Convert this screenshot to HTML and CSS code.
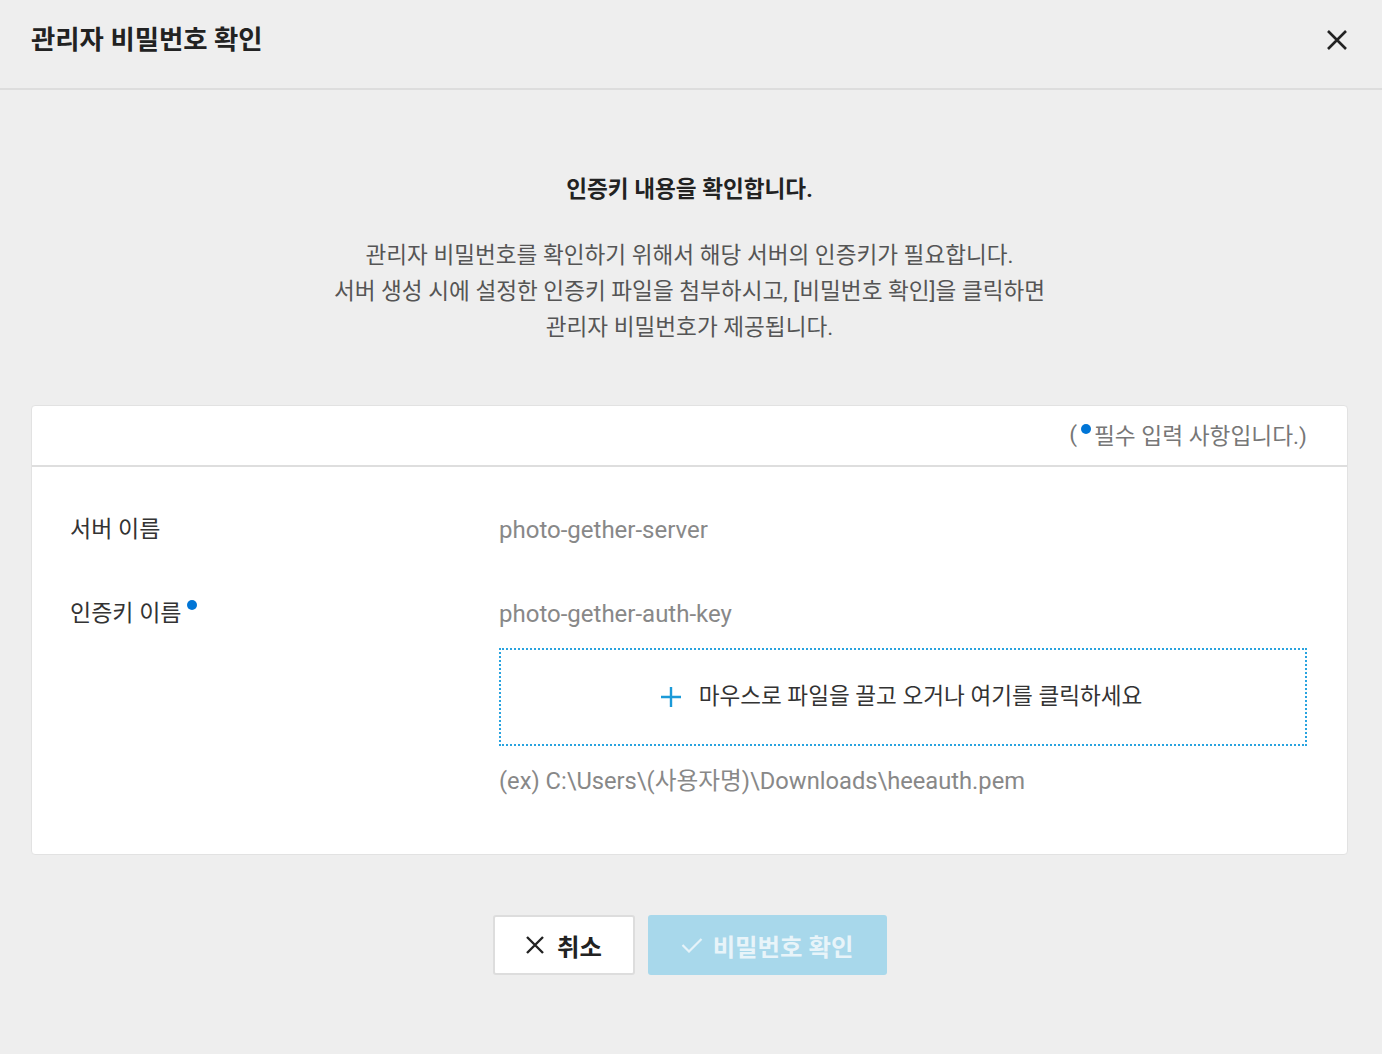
FILE: index.html
```html
<!DOCTYPE html>
<html lang="ko">
<head>
<meta charset="utf-8">
<title>관리자 비밀번호 확인</title>
<link rel="stylesheet" href="styles.css">
</head>
<body>
<header class="topbar">
  <h1 class="title">관리자 비밀번호 확인</h1>
  <button class="close" aria-label="닫기">
    <svg width="22" height="22" viewBox="0 0 22 22"><path d="M2 2L20 20M20 2L2 20" stroke="#222" stroke-width="2.6" fill="none"/></svg>
  </button>
</header>
<main class="content">
  <h2 class="lead">인증키 내용을 확인합니다.</h2>
  <p class="desc">관리자 비밀번호를 확인하기 위해서 해당 서버의 인증키가 필요합니다.<br>서버 생성 시에 설정한 인증키 파일을 첨부하시고, [비밀번호 확인]을 클릭하면<br>관리자 비밀번호가 제공됩니다.</p>

  <section class="card">
    <div class="card-head">(<span class="dot head-dot"></span>필수 입력 사항입니다.)</div>
    <div class="card-body">
      <div class="row">
        <div class="label">서버 이름</div>
        <div class="value">photo-gether-server</div>
      </div>
      <div class="row">
        <div class="label">인증키 이름<span class="dot label-dot"></span></div>
        <div class="field">
          <div class="value">photo-gether-auth-key</div>
          <div class="dropzone">
            <svg class="plus" width="22" height="22" viewBox="0 0 22 22"><path d="M11 1V21M1 11H21" stroke="#1b9ad8" stroke-width="2.4"/></svg>
            <span>마우스로 파일을 끌고 오거나 여기를 클릭하세요</span>
          </div>
          <div class="hint">(ex) C:\Users\(사용자명)\Downloads\heeauth.pem</div>
        </div>
      </div>
    </div>
  </section>

  <div class="actions">
    <button class="btn btn-cancel">
      <svg width="20" height="20" viewBox="0 0 20 20"><path d="M2 2L18 18M18 2L2 18" stroke="#222" stroke-width="2.4" fill="none"/></svg>
      <span>취소</span>
    </button>
    <button class="btn btn-confirm">
      <svg width="22" height="16" viewBox="0 0 22 16"><path d="M1.5 8L8 14.5L20.5 2" stroke="#e6f3f9" stroke-width="2.2" fill="none"/></svg>
      <span>비밀번호 확인</span>
    </button>
  </div>
</main>
</body>
</html>
```

FILE: styles.css
```css
* { box-sizing: border-box; }
html, body { margin: 0; padding: 0; }
body {
  background: #eeeeee;
  font-family: Roboto, "Noto Sans CJK KR", sans-serif;
  color: #333;
  width: 1382px;
  min-height: 1054px;
}
.topbar {
  height: 90px;
  border-bottom: 2px solid #dddddd;
  display: flex;
  align-items: center;
  justify-content: space-between;
  padding: 0 34px 0 31px;
}
.title {
  margin: 0;
  font-size: 26.4px;
  font-weight: 700;
  color: #222;
  line-height: 1;
  position: relative;
  top: -4px;
}
.close {
  border: 0;
  background: none;
  padding: 0;
  width: 22px;
  height: 22px;
  display: flex;
  cursor: pointer;
  position: relative;
  top: -4px;
}
.content {
  padding: 85px 34px 0 31px;
  display: flex;
  flex-direction: column;
  align-items: stretch;
}
.lead {
  margin: 0;
  text-align: center;
  font-size: 22.6px;
  font-weight: 700;
  line-height: 30px;
  color: #222;
}
.desc {
  margin: 33px 0 0;
  text-align: center;
  font-size: 22.6px;
  line-height: 36px;
  color: #555;
}
.card {
  margin-top: 59px;
  background: #fff;
  border: 1px solid #e2e2e2;
  border-radius: 4px;
}
.card-head {
  height: 61px;
  border-bottom: 2px solid #dedede;
  display: flex;
  align-items: center;
  justify-content: flex-end;
  padding: 0 40px 2px 0;
  font-size: 22.7px;
  color: #777;
}
.dot {
  display: inline-block;
  width: 10px;
  height: 10px;
  border-radius: 50%;
  background: #0075d6;
}
.head-dot {
  margin: 0 3px 0 4px;
  position: relative;
  top: -6px;
}
.card-body {
  padding: 45px 40px 55px 38px;
  display: flex;
  flex-direction: column;
  gap: 48px;
}
.row {
  display: flex;
  font-size: 23px;
  line-height: 36px;
}
.label {
  width: 429px;
  flex: none;
  color: #333;
}
.label-dot {
  margin-left: 5px;
  position: relative;
  top: -11px;
}
.value { color: #888; font-size: 24px; }
.field {
  flex: 1;
  display: flex;
  flex-direction: column;
}
.dropzone {
  margin-top: 16px;
  height: 98px;
  border: 2px dotted #29a3df;
  display: flex;
  align-items: center;
  justify-content: center;
  gap: 17px;
  font-size: 22.6px;
  color: #333;
  padding-right: 4px;
}
.plus { flex: none; }
.hint {
  margin-top: 17px;
  color: #888;
  font-size: 23.7px;
}
.actions {
  margin-top: 60px;
  display: flex;
  justify-content: center;
  gap: 13px;
}
.btn {
  height: 60px;
  border-radius: 3px;
  display: flex;
  align-items: center;
  justify-content: center;
  gap: 12px;
  font-family: Roboto, "Noto Sans CJK KR", sans-serif;
  font-size: 24.4px;
  font-weight: 700;
  cursor: pointer;
}
.btn-cancel {
  width: 142px;
  background: #fff;
  border: 2px solid #dddddd;
  color: #222;
}
.btn-confirm {
  width: 239px;
  background: #a8d8eb;
  border: 0;
  color: #e8f4f9;
  gap: 10px;
}
```
